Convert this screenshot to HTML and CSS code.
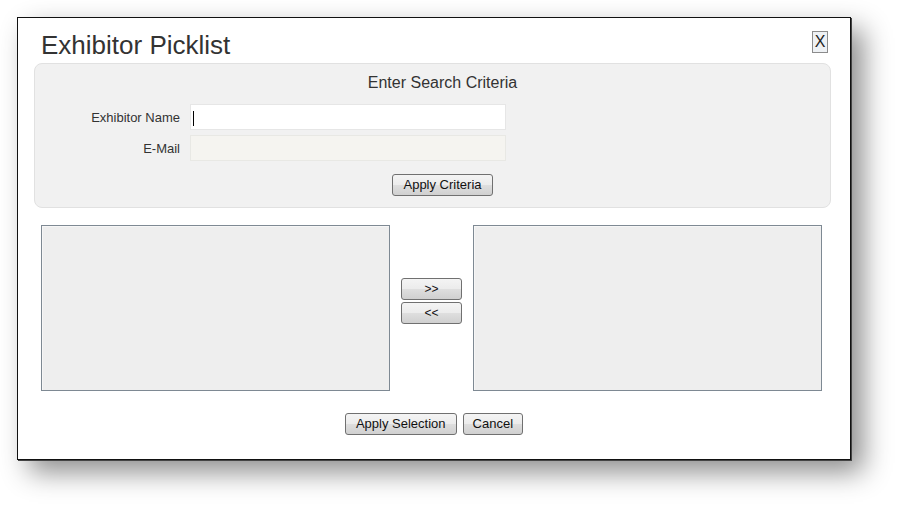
FILE: index.html
```html
<!DOCTYPE html>
<html lang="en">
<head>
<meta charset="utf-8">
<title>Exhibitor Picklist</title>
<link rel="stylesheet" href="styles.css">
</head>
<body>
<div class="dialog">
  <div class="header">
    <h1 class="title">Exhibitor Picklist</h1>
    <div class="close">X</div>
  </div>
  <div class="panel">
    <div class="panel-title">Enter Search Criteria</div>
    <div class="form">
      <div class="label">Exhibitor Name</div>
      <div class="field"><span class="caret"></span></div>
      <div class="label">E-Mail</div>
      <div class="field disabled"></div>
    </div>
    <div class="panel-actions"><button class="btn">Apply Criteria</button></div>
  </div>
  <div class="lists">
    <div class="listbox"></div>
    <div class="movers">
      <button class="btn mover">&gt;&gt;</button>
      <button class="btn mover">&lt;&lt;</button>
    </div>
    <div class="listbox"></div>
  </div>
  <div class="actions">
    <button class="btn">Apply Selection</button>
    <button class="btn cancel">Cancel</button>
  </div>
</div>
</body>
</html>
```
FILE: styles.css
```css
html, body {
  margin: 0;
  padding: 0;
  background: #ffffff;
}
body {
  min-height: 509px;
  overflow: hidden;
  font-family: "Liberation Sans", Arial, sans-serif;
  color: #333333;
}
.dialog {
  box-sizing: border-box;
  width: 834px;
  height: 443px;
  margin: 17px 0 0 17px;
  border: 1px solid #111111;
  background: #ffffff;
  box-shadow: 1px 1px 0 #444444, 12px 12px 26px rgba(0, 0, 0, 0.45);
}
.header {
  display: flex;
  justify-content: space-between;
  align-items: flex-start;
  padding: 12px 22px 0 23px;
  height: 30px;
}
.title {
  margin: 0;
  font-size: 26px;
  line-height: 30px;
  font-weight: normal;
  color: #333333;
}
.close {
  box-sizing: border-box;
  margin-top: 1px;
  width: 16px;
  height: 22px;
  border: 1px solid #8c8c8c;
  background: #eef1f4;
  color: #222222;
  font-size: 16px;
  line-height: 20px;
  text-align: center;
}
.panel {
  box-sizing: border-box;
  width: 797px;
  height: 145px;
  margin: 3px 0 0 16px;
  padding: 9px 0 11px 0;
  border: 1px solid #e1e1e1;
  border-radius: 8px;
  background: #f1f1f1;
}
.panel-title {
  padding-left: 20px;
  text-align: center;
  font-size: 16px;
  line-height: 20px;
  color: #333333;
}
.form {
  display: grid;
  grid-template-columns: 145px 316px;
  column-gap: 10px;
  row-gap: 5px;
  align-items: center;
  margin-top: 11px;
}
.label {
  text-align: right;
  font-size: 13px;
  color: #333333;
}
.field {
  box-sizing: border-box;
  height: 26px;
  border: 1px solid #e6e6e6;
  background: #ffffff;
  padding: 6px 0 0 2px;
}
.field.disabled {
  background: #f5f4f0;
  border-color: #e8e8e4;
}
.caret {
  display: block;
  width: 1px;
  height: 15px;
  background: #000000;
}
.panel-actions {
  margin-top: 13px;
  padding-left: 20px;
  text-align: center;
}
.btn {
  box-sizing: border-box;
  height: 22px;
  margin: 0;
  padding: 0 10px;
  border: 1px solid #707070;
  border-radius: 3px;
  background: linear-gradient(#f4f4f4 0%, #ececec 48%, #dedede 52%, #d0d0d0 100%);
  font-family: "Liberation Sans", Arial, sans-serif;
  font-size: 13px;
  line-height: 20px;
  color: #111111;
}
.btn.cancel {
  padding: 0 9px;
}
.lists {
  display: flex;
  align-items: flex-start;
  margin: 17px 0 0 23px;
  height: 166px;
}
.listbox {
  box-sizing: border-box;
  width: 349px;
  height: 166px;
  border: 1px solid #7e8993;
  background: #eeeeee;
  box-shadow: inset 1px 1px 0 #f6f6f6;
}
.movers {
  display: flex;
  flex-direction: column;
  gap: 2px;
  margin: 53px 11px 0 11px;
}
.mover {
  width: 61px;
  padding: 0;
  font-size: 12px;
}
.actions {
  display: flex;
  justify-content: center;
  gap: 6px;
  margin-top: 22px;
}
```
